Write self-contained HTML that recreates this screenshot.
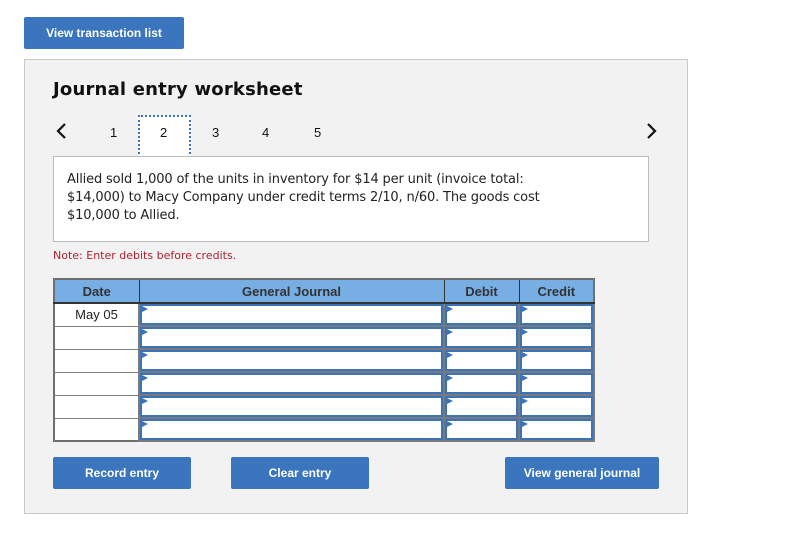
<!DOCTYPE html>
<html><head><style>
*{margin:0;padding:0;box-sizing:border-box}
body{width:794px;height:533px;background:#fff;font-family:"Liberation Sans",Arial,sans-serif;position:relative;overflow:hidden}
.btn{position:absolute;background:#3a75bd;color:#fff;font-weight:bold;font-size:12px;display:flex;align-items:center;justify-content:center;border-radius:2px}
.panel{position:absolute;left:24px;top:59px;width:664px;height:455px;background:#f2f2f2;border:1px solid #c8c8c8}
.abs{position:absolute}
.desc{position:absolute;left:53px;top:156px;width:596px;height:86px;background:#fff;border:1px solid #bcbcbc;font-family:"DejaVu Sans",Verdana,sans-serif;font-size:13px;line-height:18px;color:#222;padding:14px 0 0 13px;letter-spacing:-0.15px}
.tbl{position:absolute;left:53px;top:278px;border-collapse:collapse;border:2px solid #707070}
.tbl th{background:#77aee4;height:24px;font-size:13px;font-weight:bold;color:#333;border:1px solid #333;border-bottom:2px solid #333;padding:0}
.tbl td{height:23px;border:1px solid #808080;background:#fff;padding:0;position:relative}
.tbl td.in{background:#fff;border:2px solid #7a7a7a}
.tbl td.in div{position:absolute;left:0;top:0;right:0;bottom:0;border:2px solid #3a73b8}
.tbl td.in div:before{content:"";position:absolute;left:0;top:0;border-left:6px solid #3a73b8;border-top:3px solid transparent;border-bottom:3px solid transparent}
</style></head><body>
<div class="btn" style="left:24px;top:17px;width:160px;height:32px">View transaction list</div>
<div class="panel"></div>
<div class="abs" style="left:53px;top:79px;font-family:'DejaVu Sans',Verdana,sans-serif;font-size:18px;font-weight:bold;color:#111;letter-spacing:0.2px">Journal entry worksheet</div>
<svg class="abs" style="left:55px;top:122px" width="14" height="18"><path d="M10 2 L3 9 L10 16" stroke="#111" stroke-width="2.2" fill="none"/></svg>
<svg class="abs" style="left:644px;top:122px" width="14" height="18"><path d="M4 2 L11 9 L4 16" stroke="#111" stroke-width="2.2" fill="none"/></svg>
<div class="abs" style="left:138px;top:115px;width:53px;height:43px;background:#fff;border:2px dotted #3a73b8"></div>
<div class="abs" style="font-size:13px;color:#111;top:125px;left:110px">1</div>
<div class="abs" style="font-size:13px;color:#111;top:125px;left:160px">2</div>
<div class="abs" style="font-size:13px;color:#111;top:125px;left:212px">3</div>
<div class="abs" style="font-size:13px;color:#111;top:125px;left:262px">4</div>
<div class="abs" style="font-size:13px;color:#111;top:125px;left:314px">5</div>
<div class="desc">Allied sold 1,000 of the units in inventory for $14 per unit (invoice total:<br>$14,000) to Macy Company under credit terms 2/10, n/60. The goods cost<br>$10,000 to Allied.</div>
<div class="abs" style="left:53px;top:249px;font-family:'DejaVu Sans',Verdana,sans-serif;font-size:11px;color:#b02030">Note: Enter debits before credits.</div>
<table class="tbl">
<tr><th style="width:85px">Date</th><th style="width:305px">General Journal</th><th style="width:75px">Debit</th><th style="width:75px">Credit</th></tr>
<tr><td style="text-align:center;font-size:13px;color:#222">May 05</td><td class="in"><div></div></td><td class="in"><div></div></td><td class="in"><div></div></td></tr>
<tr><td></td><td class="in"><div></div></td><td class="in"><div></div></td><td class="in"><div></div></td></tr>
<tr><td></td><td class="in"><div></div></td><td class="in"><div></div></td><td class="in"><div></div></td></tr>
<tr><td></td><td class="in"><div></div></td><td class="in"><div></div></td><td class="in"><div></div></td></tr>
<tr><td></td><td class="in"><div></div></td><td class="in"><div></div></td><td class="in"><div></div></td></tr>
<tr><td></td><td class="in"><div></div></td><td class="in"><div></div></td><td class="in"><div></div></td></tr>
</table>
<div class="btn" style="left:53px;top:457px;width:138px;height:32px">Record entry</div>
<div class="btn" style="left:231px;top:457px;width:138px;height:32px">Clear entry</div>
<div class="btn" style="left:505px;top:457px;width:154px;height:32px">View general journal</div>
</body></html>
